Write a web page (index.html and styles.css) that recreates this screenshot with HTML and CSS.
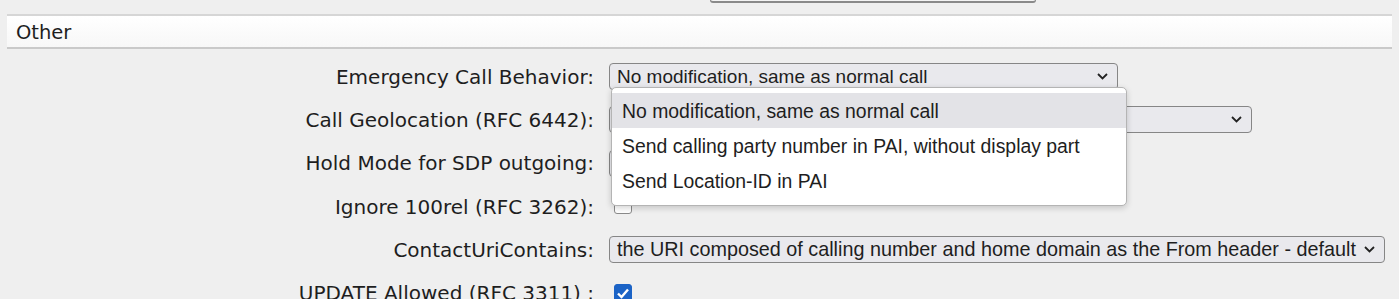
FILE: index.html
```html
<!DOCTYPE html>
<html lang="en">
<head>
    <meta charset="utf-8">
    <title>SIP settings - Other</title>
    <link rel="stylesheet" href="styles.css">
</head>
<body>
    <div class="prev-field"></div>
    <div class="page">
        <div class="section-head">Other</div>
        <div class="form">
            <div class="row">
                <label class="lbl">Emergency Call Behavior:</label>
                <div class="ctl">
                    <div class="select narrow w1">
                        <span>No modification, same as normal call</span>
                        <svg class="chev" width="11" height="7" viewBox="0 0 11 7"><path d="M1 1 L5.5 5.5 L10 1" fill="none" stroke="#222" stroke-width="1.8"/></svg>
                    </div>
                    <ul class="popup">
                        <li class="active">No modification, same as normal call</li>
                        <li>Send calling party number in PAI, without display part</li>
                        <li>Send Location-ID in PAI</li>
                    </ul>
                </div>
            </div>
            <div class="row">
                <label class="lbl">Call Geolocation (RFC 6442):</label>
                <div class="ctl">
                    <div class="select w2">
                        <span></span>
                        <svg class="chev" width="11" height="7" viewBox="0 0 11 7"><path d="M1 1 L5.5 5.5 L10 1" fill="none" stroke="#222" stroke-width="1.8"/></svg>
                    </div>
                </div>
            </div>
            <div class="row">
                <label class="lbl">Hold Mode for SDP outgoing:</label>
                <div class="ctl">
                    <div class="select w1">
                        <span></span>
                    </div>
                </div>
            </div>
            <div class="row">
                <label class="lbl">Ignore 100rel (RFC 3262):</label>
                <div class="ctl">
                    <span class="check"></span>
                </div>
            </div>
            <div class="row">
                <label class="lbl">ContactUriContains:</label>
                <div class="ctl">
                    <div class="select wide w3">
                        <span>the URI composed of calling number and home domain as the From header - default</span>
                        <svg class="chev" width="11" height="7" viewBox="0 0 11 7"><path d="M1 1 L5.5 5.5 L10 1" fill="none" stroke="#222" stroke-width="1.8"/></svg>
                    </div>
                </div>
            </div>
            <div class="row">
                <label class="lbl">UPDATE Allowed (RFC 3311) :</label>
                <div class="ctl">
                    <span class="check checked">
                        <svg width="18" height="18" viewBox="0 0 18 18"><path d="M4 9.5 L7.5 13 L14 5.5" fill="none" stroke="#fff" stroke-width="2.4"/></svg>
                    </span>
                </div>
            </div>
        </div>
    </div>
</body>
</html>
```

FILE: styles.css
```css
* {
    margin: 0;
    padding: 0;
    box-sizing: border-box;
}

html, body {
    overflow: hidden;
}

body {
    background: #efefef;
    color: #1e1e1e;
    font-family: "DejaVu Sans", Verdana, sans-serif;
    font-size: 20px;
}

.prev-field {
    width: 326px;
    height: 3px;
    margin-left: 710px;
    border: 1px solid #8a8a8a;
    border-width: 0 1px 2px 1px;
    border-radius: 0 0 3px 3px;
    background: #f4f4f4;
}

.page {
    padding: 0 7px;
}

.section-head {
    margin-top: 11px;
    height: 35px;
    padding-left: 9px;
    line-height: 33px;
    font-size: 19.5px;
    background: linear-gradient(#ffffff, #f7f7f7);
    border-top: 2px solid #d6d6d6;
    border-bottom: 2px solid #c9c9c9;
}

.form {
    margin-top: 6px;
}

.row {
    display: grid;
    grid-template-columns: 587px 1fr;
    column-gap: 15px;
    height: 43.3px;
    align-items: center;
}

.lbl {
    text-align: right;
    white-space: nowrap;
}

.ctl {
    position: relative;
    display: flex;
    align-items: center;
}

.select {
    height: 27px;
    display: flex;
    align-items: center;
    justify-content: space-between;
    padding: 0 9px 0 7px;
    background: #e9e9ed;
    border: 1px solid #868686;
    border-radius: 4px;
    white-space: nowrap;
    overflow: hidden;
}

.select.narrow {
    font-family: "Liberation Sans", Arial, sans-serif;
    font-size: 19px;
}

.select.wide {
    font-family: "Liberation Sans", Arial, sans-serif;
    font-size: 19.8px;
}

.w1 { width: 509px; }
.w2 { width: 643px; }
.w3 { width: 776px; }

.chev {
    flex: none;
    margin-left: 6px;
}

.popup {
    position: absolute;
    top: 24px;
    left: 2px;
    z-index: 2;
    width: 516px;
    padding: 5px 0 7px;
    list-style: none;
    background: #fff;
    border: 1px solid #b4b4b4;
    border-radius: 5px;
    box-shadow: 0 2px 6px rgba(0, 0, 0, 0.18);
    font-family: "Liberation Sans", Arial, sans-serif;
    font-size: 19.4px;
}

.popup li {
    height: 35px;
    padding: 2px 0 0 10px;
    line-height: 33px;
    white-space: nowrap;
}

.popup li.active {
    background: #e3e3e7;
}

.check {
    display: block;
    width: 18px;
    height: 18px;
    margin-left: 5px;
    margin-top: -4px;
    background: #fff;
    border: 1px solid #8a8a8a;
    border-radius: 3px;
}

.check.checked {
    margin-top: 0;
    background: #1b63c6;
    border-color: #1b63c6;
    position: relative;
}

.check.checked svg {
    position: absolute;
    left: -1px;
    top: -1px;
}
```
